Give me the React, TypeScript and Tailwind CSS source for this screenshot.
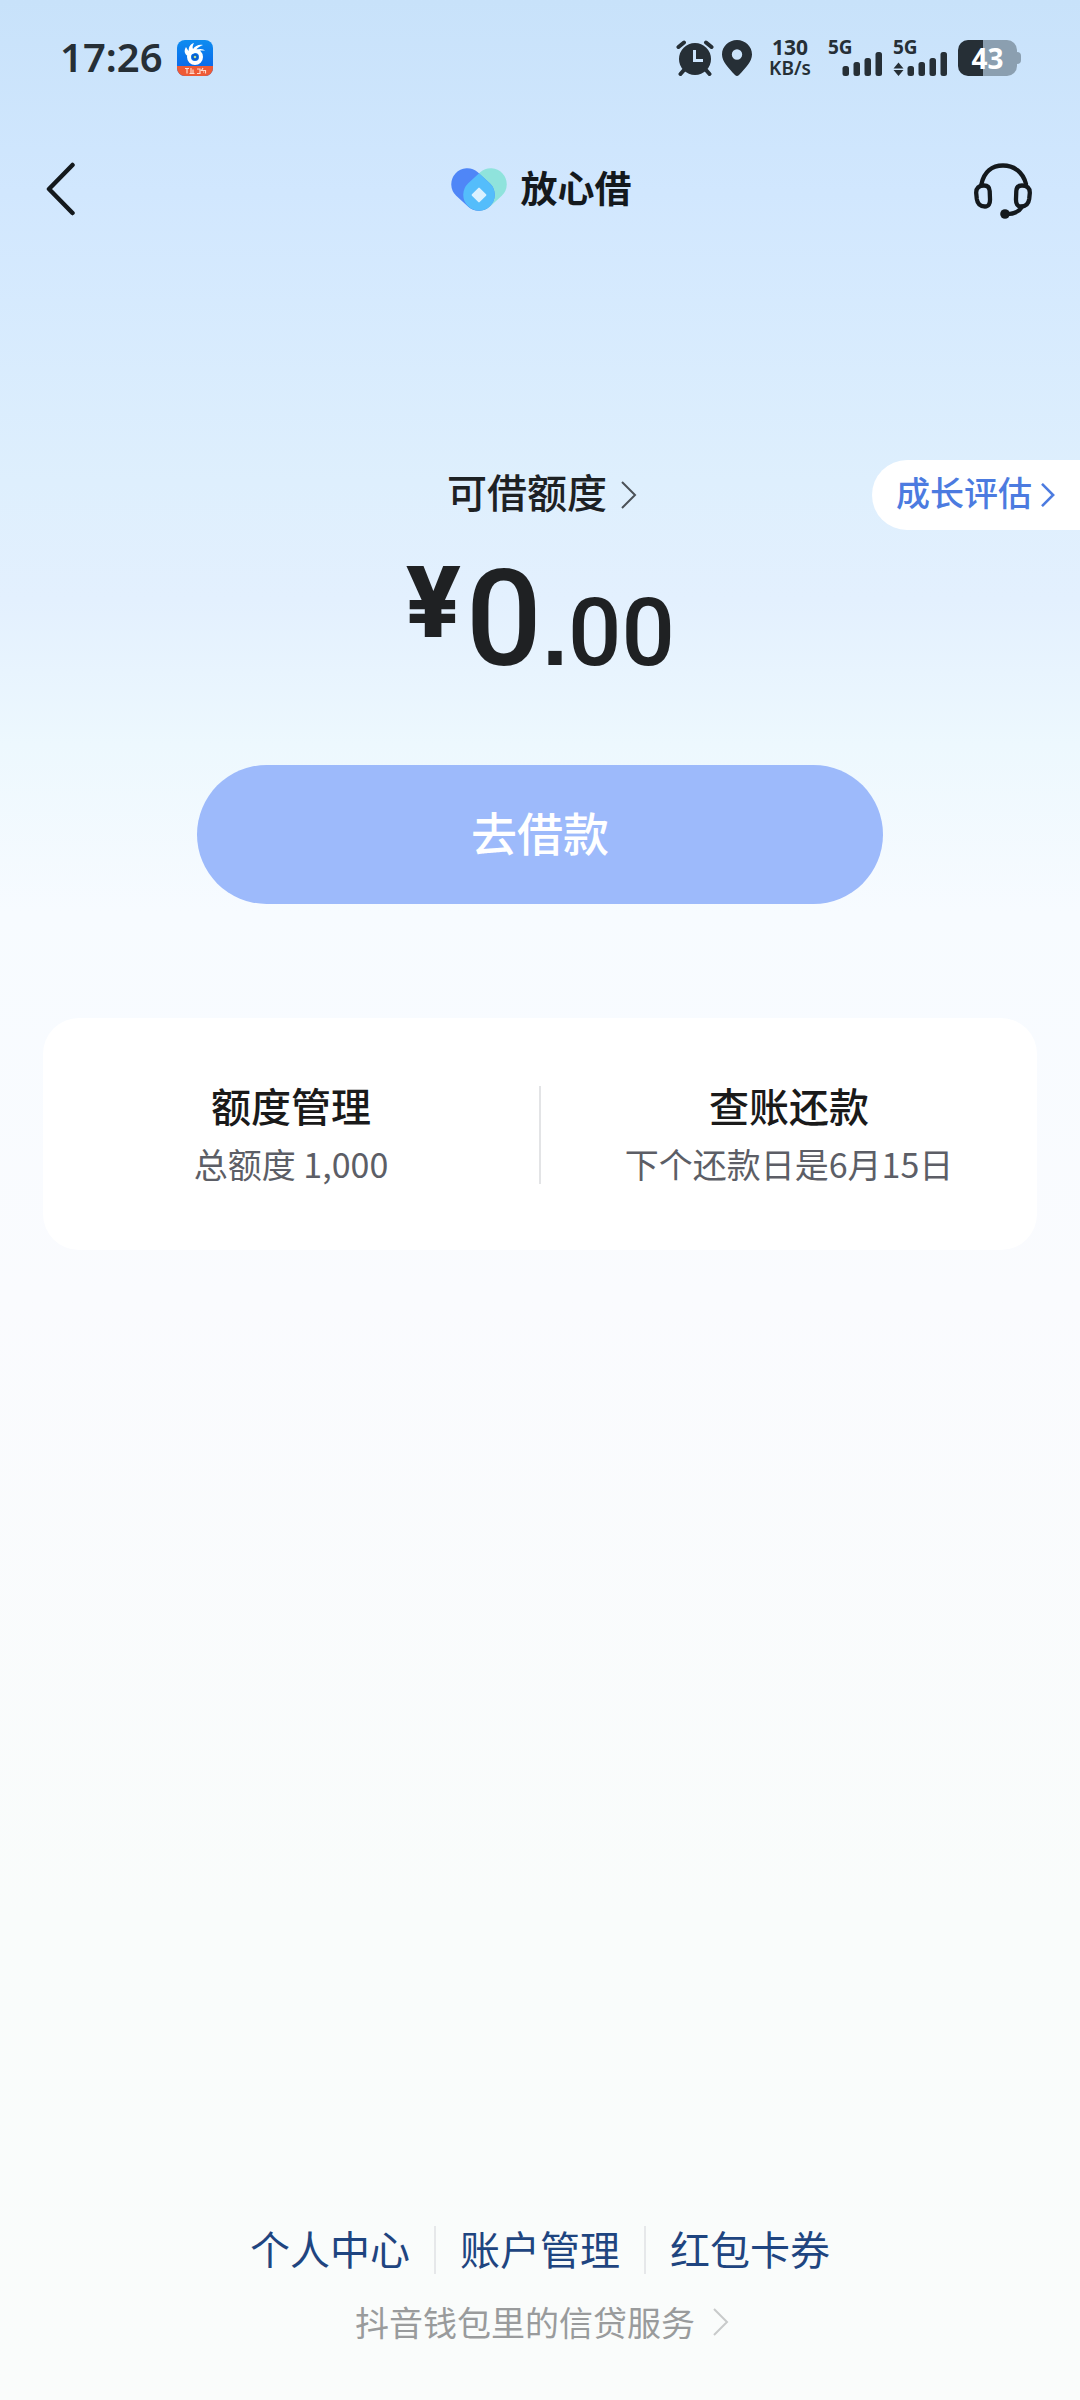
import React from 'react';

const Chevron: React.FC<{ className?: string; strokeWidth?: number }> = ({ className, strokeWidth = 2 }) => (
  <svg viewBox="0 0 16 28" className={className} fill="none" stroke="currentColor" strokeWidth={strokeWidth} aria-hidden="true">
    <path d="M1 1 L14 14 L1 27" />
  </svg>
);

const AppBadge: React.FC = () => (
  <svg viewBox="0 0 36 36" className="w-9 h-9" aria-hidden="true">
    <defs>
      <clipPath id="badge">
        <rect width="36" height="36" rx="8" />
      </clipPath>
      <linearGradient id="badgeBlue" x1="0" y1="0" x2="0" y2="1">
        <stop offset="0" stopColor="#0d8cf0" />
        <stop offset="1" stopColor="#0a5fe8" />
      </linearGradient>
    </defs>
    <g clipPath="url(#badge)">
      <rect width="36" height="36" fill="url(#badgeBlue)" />
      <circle cx="18" cy="17" r="6" fill="none" stroke="#fff" strokeWidth="4" />
      <path d="M11 16 C7 14 7 10 9 7 C10 9 11 10 12 11 C11 8 13 4 17 3 C16 5 15 7 16 9 C18 6 22 4 26 5 C23 6 20 8 19 10 C23 8 27 9 28 11 C25 10 22 11 20 12 Z" fill="#fff" />
      <circle cx="18" cy="17" r="3" fill="#0b5ccc" />
      <circle cx="18" cy="17" r="1.3" fill="#b5e08c" />
      <rect y="26" width="36" height="10" fill="#ee5a36" />
      <path d="M8 28.500h4M10 28.500v5M14 28v5.500M12.500 33.500h5M16 29.500v4M20 29h3v4.500h-3M26 28l-1.500 2.500h4v3M26 32h1" stroke="#ffd9cc" strokeWidth="1.2" fill="none" />
    </g>
  </svg>
);

const AlarmIcon: React.FC = () => (
  <svg viewBox="0 0 38 36" className="w-[38px] h-9" fill="none" stroke="#262f36" aria-hidden="true">
    <circle cx="19" cy="19" r="16" fill="#262f36" stroke="none" />
    <path d="M2.500 7 L8 2.500 M35.500 7 L30 2.500 M8 30 L4.500 34 M30 30 L33.500 34" strokeWidth="4" strokeLinecap="round" />
    <path d="M18.500 10 V20.500 H27" stroke="#cce5fd" strokeWidth="3" />
  </svg>
);

const PinIcon: React.FC = () => (
  <svg viewBox="0 0 30 36" className="w-[30px] h-9" aria-hidden="true">
    <path
      fill="#262f36"
      fillRule="evenodd"
      d="M15 0 C23.300 0 30 6.500 30 14.500 C30 21.500 23.500 28 17 35 Q15 37 13 35 C6.500 28 0 21.500 0 14.500 C0 6.500 6.700 0 15 0 Z M15 9.300 A5.200 5.200 0 1 0 15 19.700 A5.200 5.200 0 1 0 15 9.300 Z"
    />
  </svg>
);

const Signal: React.FC<{ arrows?: boolean }> = ({ arrows }) => (
  <div className="relative">
    <span className="absolute left-0 top-0 text-[19px] leading-[14px] font-bold">5G</span>
    <svg viewBox="0 0 55 36" className="w-[55px] h-9" fill="#262f36" aria-hidden="true">
      {arrows && <path d="M5.500 22.500 L10.500 28.500 H0.500 Z M5.500 36 L0.500 30 H10.500 Z" />}
      <rect x="14.500" y="26" width="6.500" height="10" rx="2.500" />
      <rect x="25.500" y="22" width="6.500" height="14" rx="2.500" />
      <rect x="36.500" y="18" width="6.500" height="18" rx="2.500" />
      <rect x="47.500" y="12" width="6.500" height="24" rx="2.500" />
    </svg>
  </div>
);

const StatusBar: React.FC = () => (
  <div className="flex items-center justify-between h-[116px] pl-[60px] pr-[59px] text-[#262f36] font-['Noto_Sans','Noto_Sans_CJK_SC',sans-serif]">
    <div className="flex items-center gap-[14px]">
      <span className="pb-[2px] text-[40px] leading-none font-semibold">17:26</span>
      <AppBadge />
    </div>
    <div className="flex items-center">
      <AlarmIcon />
      <div className="ml-2">
        <PinIcon />
      </div>
      <div className="ml-4 w-11 text-center">
        <p className="text-[21px] leading-[21px] font-bold">130</p>
        <p className="text-[19px] leading-[21px] font-semibold">KB/s</p>
      </div>
      <div className="ml-4 flex gap-[10px]">
        <Signal />
        <Signal arrows />
      </div>
      <div className="ml-[10px] flex items-center">
        <div className="flex items-center justify-center w-[59px] h-9 rounded-[10px] bg-linear-to-r from-[#262f36] from-43% to-[#8b9fb0] to-43% text-white text-[28px] leading-none font-bold">
          43
        </div>
        <div className="w-1 h-3 rounded-r-sm bg-[#8b9fb0]" />
      </div>
    </div>
  </div>
);

const Logo: React.FC = () => (
  <svg viewBox="0 0 56 43" className="w-14 h-[43px]" aria-hidden="true">
    <defs>
      <clipPath id="leftLeaf">
        <path d="M26.800 4.200 L38.800 15.200 A16 16 0 0 1 17.200 38.800 L5.200 27.800 A16 16 0 0 1 26.800 4.200 Z" />
      </clipPath>
    </defs>
    <path fill="#8fe3dc" d="M29.200 4.200 L17.200 15.200 A16 16 0 0 0 38.800 38.800 L50.800 27.800 A16 16 0 0 0 29.200 4.200 Z" />
    <path fill="#4f86f7" d="M26.800 4.200 L38.800 15.200 A16 16 0 0 1 17.200 38.800 L5.200 27.800 A16 16 0 0 1 26.800 4.200 Z" />
    <path
      fill="#54bdfb"
      clipPath="url(#leftLeaf)"
      d="M29.200 4.200 L17.200 15.200 A16 16 0 0 0 38.800 38.800 L50.800 27.800 A16 16 0 0 0 29.200 4.200 Z"
    />
    <rect x="22.500" y="21.500" width="11" height="11" rx="1" fill="#daf1ff" transform="rotate(45 28 27)" />
  </svg>
);

const HeadsetIcon: React.FC = () => (
  <svg viewBox="0 0 58 56" className="w-[58px] h-14" fill="none" stroke="#14191d" strokeWidth="4.300" strokeLinecap="round" aria-hidden="true">
    <path d="M7.500 21 C10 9 18 2.500 29 2.500 C40 2.500 49 9 52 21" />
    <path d="M10 22.500 C14 22.500 15.500 24.500 15.700 28 L16 36 C16.200 41 14.500 43.500 11 43.500 C6 43.500 3.500 41 2.800 36 L2.200 30 C2 25 5 22.500 10 22.500 Z" />
    <path d="M48 22.500 C44 22.500 42.500 24.500 42.300 28 L42 36 C41.800 41 43.500 43.500 47 43.500 C52 43.500 54.500 41 55.200 36 L55.800 30 C56 25 53 22.500 48 22.500 Z" />
    <path d="M48 44 C45 49 40 51 32 51" />
    <circle cx="31" cy="51" r="4.800" fill="#14191d" stroke="none" />
  </svg>
);

const Header: React.FC = () => (
  <header className="flex items-center justify-between h-[146px] pl-[46px] pr-12">
    <button type="button" aria-label="返回" className="w-[62px]">
      <svg viewBox="0 0 30 54" className="w-[30px] h-[54px]" fill="none" stroke="#14191d" strokeWidth="4.500" strokeLinecap="round" strokeLinejoin="round">
        <path d="M26.500 3 L3 27 L26.500 51" />
      </svg>
    </button>
    <h1 className="flex items-center gap-[14px] text-[37px] leading-none font-bold text-[#14191d]">
      <Logo />
      <span className="pb-1">放心借</span>
    </h1>
    <button type="button" aria-label="客服" className="pt-1">
      <HeadsetIcon />
    </button>
  </header>
);

const cards = [
  { title: '额度管理', desc: '总额度 1,000' },
  { title: '查账还款', desc: '下个还款日是6月15日' },
];

const links = ['个人中心', '账户管理', '红包卡券'];

export const App: React.FC = () => {
  return (
    <div className="min-h-screen flex flex-col font-['Noto_Sans_CJK_SC',sans-serif] bg-[linear-gradient(to_bottom,#c8e2fa_0%,#d1e7fe_8%,#deeffd_20%,#e3f0fe_25%,#edf8fe_31%,#f7fbff_38%,#fafbfe_54%,#f9fcfb_80%,#fafcfb_100%)]">
      <StatusBar />
      <Header />

      <main>
        <section className="pt-[198px]">
          <div className="grid grid-cols-[1fr_auto_1fr] items-center h-[70px]">
            <a href="#quota" className="col-start-2 flex items-center gap-[14px] pl-1 text-[40px] leading-[56px] font-medium text-[#1d2124]">
              <span className="pb-2">可借额度</span>
              <Chevron className="w-4 h-7 text-[#4b5157]" />
            </a>
            <a
              href="#growth"
              className="justify-self-end flex items-center gap-2 h-[70px] px-6 rounded-l-full bg-white text-[34px] leading-[48px] font-medium text-[#4c7be0]"
            >
              <span className="pb-[6px]">成长评估</span>
              <Chevron className="w-4 h-6" strokeWidth={3} />
            </a>
          </div>

          <div className="mt-[22px] h-[136px] flex justify-center items-start gap-1 font-['Roboto',sans-serif] text-[#1f2123]">
            <span className="text-[98px] leading-[100px] font-extrabold font-['Inter',sans-serif]">¥</span>
            <span className="text-[134px] leading-[136px] font-medium">
              0
              <span className="text-[94px]">
                <span className="font-bold font-['Liberation_Sans',sans-serif]">.</span>00
              </span>
            </span>
          </div>

          <button
            type="button"
            className="block w-[686px] max-w-full h-[139px] mx-auto mt-[77px] pb-2 rounded-full bg-[#9dbafb] text-white text-[46px] leading-none font-medium"
          >
            去借款
          </button>
        </section>

        <section className="flex items-center mx-[43px] mt-[114px] pt-[58px] pb-14 rounded-[36px] bg-white">
          {cards.map((card, i) => (
            <React.Fragment key={card.title}>
              {i > 0 && <div className="w-[2px] h-[98px] bg-[#e3e4e6]" />}
              <a href="#detail" className="flex-1 text-center">
                <h2 className="text-[40px] leading-[58px] font-medium text-[#1a1a1a]">{card.title}</h2>
                <p className="text-[34px] leading-[60px] text-[#5c5e66]">{card.desc}</p>
              </a>
            </React.Fragment>
          ))}
        </section>
      </main>

      <footer className="mt-auto pb-[54px]">
        <nav className="flex items-center justify-center text-[40px] leading-[56px] text-[#1f4580]">
          {links.map((label, i) => (
            <React.Fragment key={label}>
              {i > 0 && <div className="w-[2px] h-12 bg-[#e6e8ea]" />}
              <a href="#link" className="px-6 pb-1">
                {label}
              </a>
            </React.Fragment>
          ))}
        </nav>
        <a href="#service" className="mt-[18px] flex items-center justify-center gap-[18px] pl-1 text-[34px] leading-[48px] text-[#999b9c]">
          抖音钱包里的信贷服务
          <Chevron className="w-4 h-7 text-[#c8caca]" />
        </a>
      </footer>
    </div>
  );
};

export default App;
